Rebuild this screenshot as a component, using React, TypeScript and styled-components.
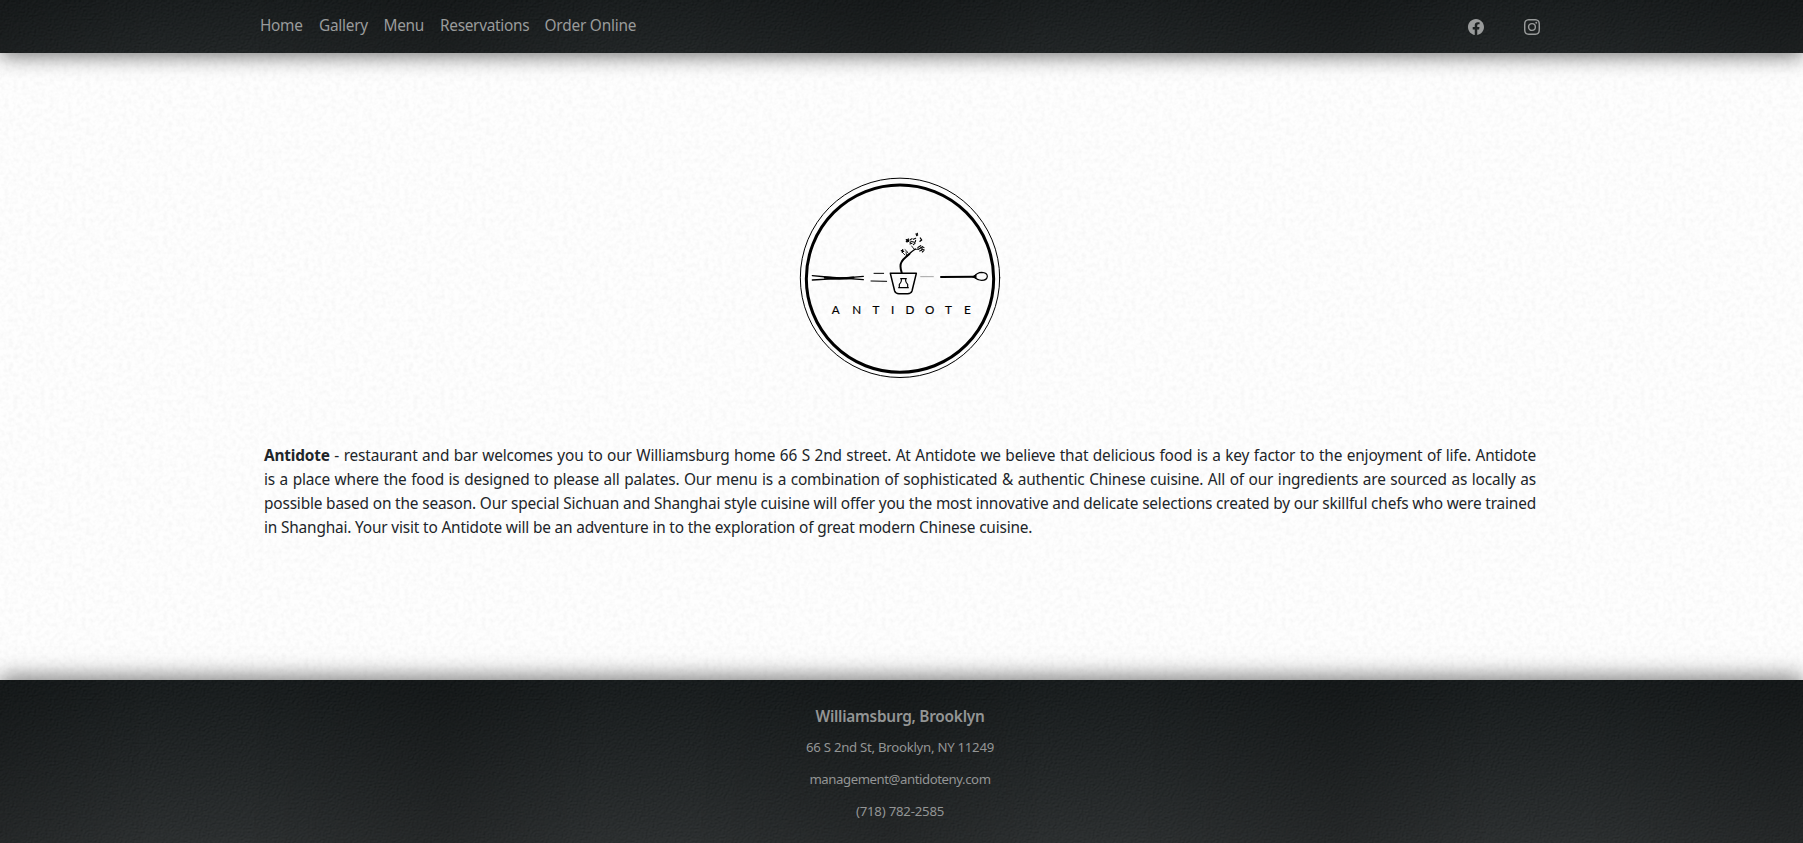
import React from "react";
import styled, { createGlobalStyle } from "styled-components";
import { BsFacebook, BsInstagram } from "react-icons/bs";

const texture = (svg: string) => `url("data:image/svg+xml,${encodeURIComponent(svg)}")`;

const paper = texture(
  `<svg xmlns="http://www.w3.org/2000/svg" width="400" height="400"><filter id="n" x="0" y="0" width="100%" height="100%" color-interpolation-filters="sRGB"><feTurbulence type="fractalNoise" baseFrequency="0.22" numOctaves="2" seed="4" stitchTiles="stitch"/><feColorMatrix values="0 0 0 0 0.94  0 0 0 0 0.94  0 0 0 0 0.94  1 0 0 0 -0.38"/></filter><rect width="400" height="400" filter="url(#n)"/></svg>`
);

const slate = texture(
  `<svg xmlns="http://www.w3.org/2000/svg" width="447" height="300"><filter id="n" x="0" y="0" width="100%" height="100%" color-interpolation-filters="sRGB"><feTurbulence type="fractalNoise" baseFrequency="0.45 0.55" numOctaves="3" seed="9" stitchTiles="stitch" result="t"/><feDiffuseLighting in="t" surfaceScale="0.8" lighting-color="#ffffff" result="l"><feDistantLight azimuth="235" elevation="50"/></feDiffuseLighting><feColorMatrix values="0.22 0 0 0 -0.055  0.22 0 0 0 -0.045  0.22 0 0 0 -0.042  0 0 0 0 0.5"/></filter><rect width="447" height="300" filter="url(#n)"/></svg>`
);

const bands =
  "linear-gradient(90deg, rgba(0,0,0,.16), rgba(0,0,0,0) 35%, rgba(0,0,0,0) 55%, rgba(0,0,0,.16)) -4px 0 / 447px 100%";

const GlobalStyle = createGlobalStyle`
  *, *::before, *::after { box-sizing: border-box; }
  body {
    margin: 0;
    color: #212529;
    background: #fefefe ${paper};
    font-family: "Noto Sans", "Open Sans", sans-serif;
    font-size: 15.4px;
    line-height: 24px;
  }
`;

const Page = styled.div`
  display: flex;
  flex-direction: column;
  height: 843px;
  overflow: hidden;
`;

const Header = styled.header`
  height: 53px;
  padding-right: 3px;
  background: ${bands}, ${slate}, linear-gradient(#171c1d, #262b2c);
  box-shadow: 0 4px 20px rgba(0, 0, 0, 0.5);
`;

const Bar = styled.div`
  display: flex;
  align-items: center;
  justify-content: space-between;
  width: 1280px;
  height: 53px;
  margin: 0 auto;
`;

const Nav = styled.nav`
  display: flex;
  gap: 16px;
  padding-bottom: 1px;
`;

const NavLink = styled.a<{ $width: number; $spacing: number }>`
  width: ${(p) => p.$width}px;
  color: #999b9b;
  letter-spacing: ${(p) => p.$spacing}px;
  text-decoration: none;
  white-space: nowrap;
`;

const Social = styled.div`
  display: flex;
  gap: 40px;
  padding-top: 1px;
  color: #999b9b;

  svg { display: block; }
`;

const Main = styled.main`
  display: flex;
  flex: 1;
  flex-direction: column;
  align-items: center;
  padding: 117px 3px 0 0;
`;

const Logo = styled.svg`
  flex: none;
  width: 220px;
  height: 215px;
  font-family: Lato, sans-serif;
`;

const Intro = styled.p`
  width: 1272px;
  margin: 59px 0 0;
  letter-spacing: -0.17px;
`;

const Line = styled.span`
  display: block;
  white-space: nowrap;
  text-align: justify;
  text-align-last: justify;

  &:last-child { text-align-last: left; }
`;

const Footer = styled.footer`
  display: flex;
  flex-direction: column;
  align-items: center;
  height: 163px;
  padding: 25px 3px 0 0;
  color: #939595;
  background: ${bands}, ${slate}, linear-gradient(#141a1b, #3b3f40);
  box-shadow: 0 -4px 20px rgba(0, 0, 0, 0.5);
`;

const FooterTitle = styled.h2`
  margin: 0 0 8px;
  font-size: 15.4px;
  font-weight: 600;
  line-height: 24px;
  letter-spacing: -0.25px;
`;

const FooterLine = styled.p<{ $spacing: number }>`
  margin: 0 0 11px;
  font-size: 13.2px;
  line-height: 21px;
  letter-spacing: ${(p) => p.$spacing}px;
`;

const links = [
  { label: "Home", width: 43, spacing: -0.3 },
  { label: "Gallery", width: 48.5, spacing: -0.25 },
  { label: "Menu", width: 40.5, spacing: -0.3 },
  { label: "Reservations", width: 88.5, spacing: -0.3 },
  { label: "Order Online", width: 92, spacing: -0.2 },
];

const letters: [string, number][] = [
  ["A", 137], ["N", 200], ["T", 258], ["I", 308],
  ["D", 360], ["O", 419], ["T", 475], ["E", 532],
];

function AntidoteLogo() {
  return (
    <Logo viewBox="0 0 660 645" fill="none" stroke="#000" strokeLinecap="round" strokeLinejoin="round">
      <circle cx="330" cy="323.5" r="299" strokeWidth="3" />
      <circle cx="330" cy="326" r="281" strokeWidth="9" />
      {/* chopsticks */}
      <path d="M67 317 L110 321 L220 329 M67 330 L150 325 L220 319" strokeWidth="4" />
      <path d="M105 323 Q150 328 190 323" strokeWidth="7" />
      <path d="M252 310 H281 M243 333 L290 334" strokeWidth="3" />
      {/* pot and flask */}
      <path d="M301 310 H379 L366 363 Q363 371 353 371 H327 Q317 371 314 363 Z" strokeWidth="4.5" />
      <path d="M332 326 H349 M334 327 V333 Q333 338 328 343 V353 M353 353 V343 Q348 338 347 333 V327 M326 353 H355" strokeWidth="3.5" />
      {/* bonsai */}
      <path d="M335 308 Q328 286 335 275 C340 266 350 260 358 252" strokeWidth="6" />
      <path d="M352 257 Q364 245 376 237" strokeWidth="4" />
      <path d="M345 255 L340 250 M350 258 L348 246 M345 239 L350 243 L353 248 M371 236 L365 228 M373 238 L384 238" strokeWidth="2.5" />
      <path d="M334 242 L341 244 M338 239 L337 247 M378 192 L383 195 M382 190 L380 197 M349 209 L356 214 M355 207 L351 216 M391 204 L395 210 L390 214 M349 214 L356 211" strokeWidth="4" />
      <path d="M360 210 L366 206 M370 208 L377 205 M360 218 L364 214 M367 215 L374 217 M360 222 L366 220 M370 224 L375 220 M377 211 L376 216 M386 231 L392 227 M396 229 L402 233 M385 238 L391 235 M394 237 L403 240 M389 243 L395 241 M397 246 L400 243 M392 232 L397 234 M383 234 L385 231" strokeWidth="3.2" />
      {/* spoon */}
      <path d="M392 320 H430" stroke="#777" strokeWidth="2" />
      <path d="M453 321 L552 320" strokeWidth="6" />
      <path d="M552 320 Q562 307 575 307 Q592 308 592 319 Q591 331 575 331 Q562 331 552 320 Z" strokeWidth="3.5" />
      <path d="M548 320 L558 315 V324 Z" fill="#000" strokeWidth="3" />
      <g fill="#000" stroke="#000" strokeWidth="0.5" fontSize="35" textAnchor="middle">
        {letters.map(([letter, x]) => (
          <text key={x} x={x} y="432">{letter}</text>
        ))}
      </g>
    </Logo>
  );
}

export default function App() {
  return (
    <>
      <GlobalStyle />
      <Page>
        <Header>
          <Bar>
            <Nav>
              {links.map((l) => (
                <NavLink key={l.label} $width={l.width} $spacing={l.spacing}>{l.label}</NavLink>
              ))}
            </Nav>
            <Social>
              <BsFacebook size={16} />
              <BsInstagram size={16} />
            </Social>
          </Bar>
        </Header>
        <Main>
          <AntidoteLogo />
          <Intro>
            <Line>
              <b>Antidote</b> - restaurant and bar welcomes you to our Williamsburg home 66 S 2nd street. At
              Antidote we believe that delicious food is a key factor to the enjoyment of life. Antidote
            </Line>
            <Line>
              is a place where the food is designed to please all palates. Our menu is a combination of
              sophisticated &amp; authentic Chinese cuisine. All of our ingredients are sourced as locally as
            </Line>
            <Line>
              possible based on the season. Our special Sichuan and Shanghai style cuisine will offer you the
              most innovative and delicate selections created by our skillful chefs who were trained
            </Line>
            <Line>
              in Shanghai. Your visit to Antidote will be an adventure in to the exploration of great modern
              Chinese cuisine.
            </Line>
          </Intro>
        </Main>
        <Footer>
          <FooterTitle>Williamsburg, Brooklyn</FooterTitle>
          <FooterLine $spacing={-0.26}>66 S 2nd St, Brooklyn, NY 11249</FooterLine>
          <FooterLine $spacing={-0.43}>management@antidoteny.com</FooterLine>
          <FooterLine $spacing={-0.2}>(718) 782-2585</FooterLine>
        </Footer>
      </Page>
    </>
  );
}
